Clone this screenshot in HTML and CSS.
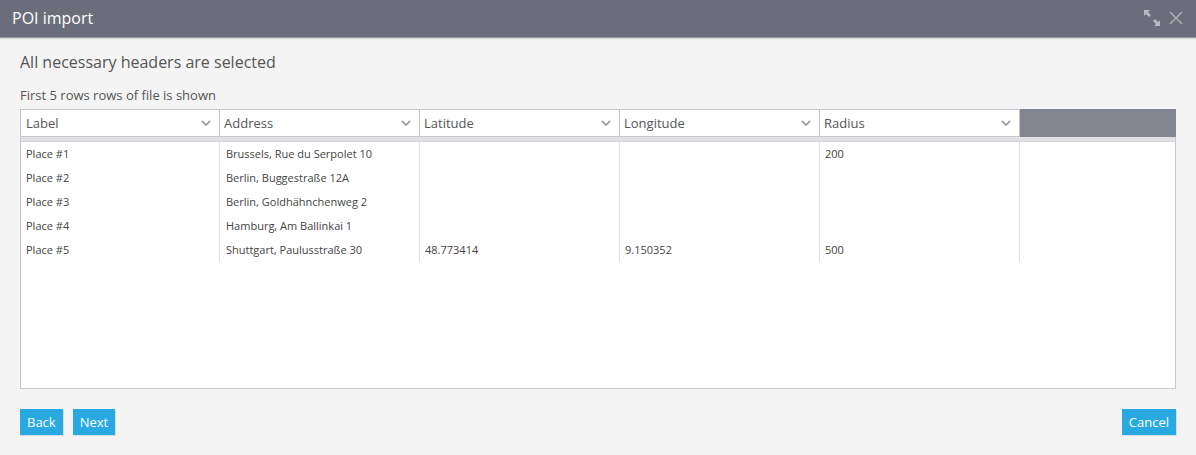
FILE: index.html
```html
<!DOCTYPE html>
<html>
<head>
<meta charset="utf-8">
<link rel="stylesheet" href="styles.css">
</head>
<body>
<div class="titlebar">
  <span class="title">POI import</span>
  <div class="tools">
    <svg class="ico" width="18" height="18" viewBox="0 0 18 18">
      <path d="M1 1 L7 1 L5 3 L8 6 L6 8 L3 5 L1 7 Z" fill="#b8b9c2"/>
      <path d="M17 17 L11 17 L13 15 L10 12 L12 10 L15 13 L17 11 Z" fill="#b8b9c2"/>
    </svg>
    <svg class="ico" width="14" height="14" viewBox="0 0 14 14">
      <path d="M1 1 L13 13 M13 1 L1 13" stroke="#b8b9c2" stroke-width="1.2"/>
    </svg>
  </div>
</div>
<div class="content">
  <h2 class="heading">All necessary headers are selected</h2>
  <p class="sub">First 5 rows rows of file is shown</p>
  <div class="grid">
    <div class="head">
      <div class="sel"><span>Label</span><svg class="chev" width="10" height="7" viewBox="0 0 10 7"><path d="M1 1 L5 5 L9 1" fill="none" stroke="#888" stroke-width="1.5"/></svg></div>
      <div class="sel"><span>Address</span><svg class="chev" width="10" height="7" viewBox="0 0 10 7"><path d="M1 1 L5 5 L9 1" fill="none" stroke="#888" stroke-width="1.5"/></svg></div>
      <div class="sel"><span>Latitude</span><svg class="chev" width="10" height="7" viewBox="0 0 10 7"><path d="M1 1 L5 5 L9 1" fill="none" stroke="#888" stroke-width="1.5"/></svg></div>
      <div class="sel"><span>Longitude</span><svg class="chev" width="10" height="7" viewBox="0 0 10 7"><path d="M1 1 L5 5 L9 1" fill="none" stroke="#888" stroke-width="1.5"/></svg></div>
      <div class="sel"><span>Radius</span><svg class="chev" width="10" height="7" viewBox="0 0 10 7"><path d="M1 1 L5 5 L9 1" fill="none" stroke="#888" stroke-width="1.5"/></svg></div>
      <div class="filler"></div>
    </div>
    <div class="band"></div>
    <div class="rows">
      <div class="col">
        <div class="cell">Place #1</div>
        <div class="cell">Place #2</div>
        <div class="cell">Place #3</div>
        <div class="cell">Place #4</div>
        <div class="cell">Place #5</div>
      </div>
      <div class="col">
        <div class="cell">Brussels, Rue du Serpolet 10</div>
        <div class="cell">Berlin, Buggestraße 12A</div>
        <div class="cell">Berlin, Goldhähnchenweg 2</div>
        <div class="cell">Hamburg, Am Ballinkai 1</div>
        <div class="cell">Shuttgart, Paulusstraße 30</div>
      </div>
      <div class="col">
        <div class="cell"></div>
        <div class="cell"></div>
        <div class="cell"></div>
        <div class="cell"></div>
        <div class="cell">48.773414</div>
      </div>
      <div class="col">
        <div class="cell"></div>
        <div class="cell"></div>
        <div class="cell"></div>
        <div class="cell"></div>
        <div class="cell">9.150352</div>
      </div>
      <div class="col">
        <div class="cell">200</div>
        <div class="cell"></div>
        <div class="cell"></div>
        <div class="cell"></div>
        <div class="cell">500</div>
      </div>
    </div>
  </div>
  <div class="actions">
    <div class="left">
      <button class="btn">Back</button>
      <button class="btn">Next</button>
    </div>
    <button class="btn">Cancel</button>
  </div>
</div>
</body>
</html>
```
FILE: styles.css
```css
* { box-sizing: border-box; }
html, body { margin: 0; padding: 0; }
body {
  background: #f4f4f4;
  font-family: "Open Sans", "Liberation Sans", sans-serif;
  color: #555;
  width: 1196px;
  height: 455px;
  overflow: hidden;
}
.titlebar {
  height: 38px;
  background: #6b6d7b;
  border-bottom: 1px solid #9a9ba4;
  box-shadow: 0 1px 1px rgba(0,0,0,0.12);
  display: flex;
  align-items: center;
  justify-content: space-between;
  padding: 0 13px 1px 12px;
}
.title {
  color: #fff;
  font-size: 16px;
}
.tools {
  display: flex;
  align-items: center;
  gap: 8px;
}
.content {
  padding: 0 20px;
}
.heading {
  font-weight: normal;
  font-size: 16px;
  line-height: 22px;
  margin: 13px 0 0 0;
  color: #555;
}
.sub {
  font-size: 13px;
  line-height: 16px;
  margin: 14px 0 6px 0;
  color: #555;
}
.grid {
  height: 280px;
  border: 1px solid #c6c6cc;
  border-top: none;
  background: #fff;
}
.head {
  display: flex;
  height: 28px;
}
.sel {
  width: 200px;
  height: 28px;
  border: 1px solid #c6c6cc;
  border-left: none;
  background: #fff;
  display: flex;
  align-items: center;
  justify-content: space-between;
  padding: 0 8px 0 4px;
  font-size: 13px;
  color: #555;
}
.sel:first-child { width: 199px; padding-left: 5px; }
.chev { display: block; }
.filler {
  flex: 1;
  background: #82848f;
  margin-right: -1px;
}
.band {
  height: 5px;
  background: #e1e1e4;
  border-bottom: 1px solid #d4d4d8;
}
.rows {
  display: flex;
}
.col {
  width: 200px;
  border-right: 1px solid #e0e0e3;
}
.col:first-child { width: 199px; }
.cell {
  height: 24px;
  line-height: 24px;
  font-size: 11px;
  color: #444;
  padding-left: 5px;
}
.col:nth-child(2) .cell { padding-left: 6px; }
.actions {
  display: flex;
  justify-content: space-between;
  margin-top: 20px;
}
.left {
  display: flex;
  gap: 10px;
}
.btn {
  height: 26px;
  border: none;
  background: #29a9e1;
  color: #fff;
  font-family: "Open Sans", "Liberation Sans", sans-serif;
  font-size: 13px;
  padding: 0 7px;
  box-shadow: 1px 1px 0 #dcdcdc;
  cursor: pointer;
}
```
